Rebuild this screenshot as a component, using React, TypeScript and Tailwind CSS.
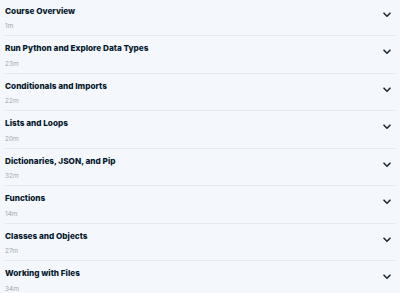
import React from "react";

const items = [
  ["Course Overview", "1m"],
  ["Run Python and Explore Data Types", "23m"],
  ["Conditionals and Imports", "22m"],
  ["Lists and Loops", "20m"],
  ["Dictionaries, JSON, and Pip", "32m"],
  ["Functions", "14m"],
  ["Classes and Objects", "27m"],
  ["Working with Files", "34m"],
];

function Chevron() {
  return (
    <svg width="8" height="6" viewBox="0 0 8 6" fill="none" className="mt-[7px] shrink-0">
      <path d="M1 1.2 L4 4.2 L7 1.2" stroke="#1f2a37" strokeWidth="1.6" strokeLinecap="round" strokeLinejoin="round" />
    </svg>
  );
}

export default function App() {
  return (
    <div
      className="w-[400px] h-[293px] overflow-hidden bg-[#f4f7fb]"
      style={{ fontFamily: "Inter, 'Noto Sans', sans-serif" }}
    >
      <div className="flex flex-col pl-[5px] pr-[4px] -mt-[1.5px]">
        {items.map(([title, dur], i) => (
          <div key={i} className="h-[37.5px] flex items-start justify-between border-b border-[#e6eaf0] pt-[6px]">
            <div className="flex flex-col">
              <div className="text-[8.2px] leading-[12px] font-extrabold text-[#05192d]">{title}</div>
              <div className="mt-[5.5px] text-[6.5px] leading-[8px] text-[#a0a8b2]">{dur}</div>
            </div>
            <div className="pr-[5px]">
              <Chevron />
            </div>
          </div>
        ))}
      </div>
    </div>
  );
}
